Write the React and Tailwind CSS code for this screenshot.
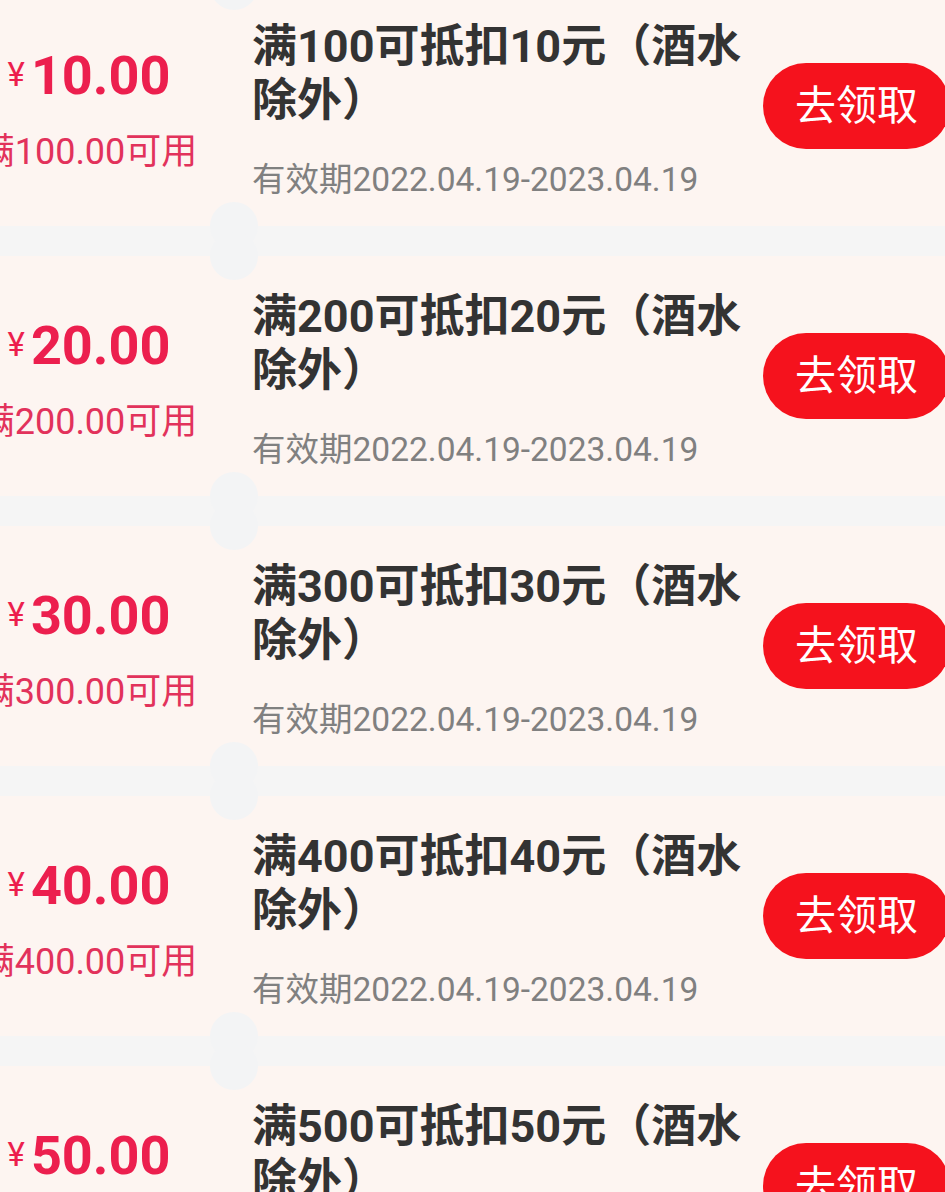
import React from 'react';

const coupons = [
  { amount: '10.00', min: '100', off: '10' },
  { amount: '20.00', min: '200', off: '20' },
  { amount: '30.00', min: '300', off: '30' },
  { amount: '40.00', min: '400', off: '40' },
  { amount: '50.00', min: '500', off: '50' },
];

const font = { fontFamily: "Roboto, 'Noto Sans CJK SC', sans-serif" };

const CouponCard = ({ amount, min, off }) => (
  <div className="relative flex h-[240px] shrink-0 items-start bg-[#fdf5f1]">
    {/* notches on the divider */}
    <span className="absolute left-[210px] top-[-24px] h-[48px] w-[48px] rounded-full bg-[#f3f4f5]" />
    <span className="absolute bottom-[-24px] left-[210px] h-[48px] w-[48px] rounded-full bg-[#f3f4f5]" />

    <div className="flex w-[176px] shrink-0 flex-col items-center pt-[60px]">
      <div className="ml-[2px] flex h-[60px] items-center whitespace-nowrap text-[#ec1f4e]">
        <span className="mr-[6px] mt-[-4px] text-[33px] leading-none">¥</span>
        <span className="text-[54px] font-bold leading-none">{amount}</span>
      </div>
      <div className="mt-[24px] whitespace-nowrap text-[36px] leading-[44px] text-[#e2325b]">
        满{min}.00可用
      </div>
    </div>

    <div className="ml-[76px] flex w-[493px] shrink-0 flex-col pt-[34px]">
      <div className="text-[45px] font-bold leading-[54px] text-[#333333]">
        满{min}可抵扣{off}元（酒水除外）
      </div>
      <div className="mt-[32px] whitespace-nowrap text-[33.5px] leading-[40px] text-[#808080]">
        有效期2022.04.19-2023.04.19
      </div>
    </div>

    <button className="ml-[18px] mt-[77px] flex h-[86px] shrink-0 items-center rounded-full bg-[#f5121d] px-[32px] text-[41px] leading-none whitespace-nowrap text-white">
      去领取
    </button>
  </div>
);

export default function App() {
  return (
    <div className="h-[1192px] w-[945px] overflow-hidden bg-[#f5f5f5]" style={font}>
      <div className="mt-[-14px] flex flex-col gap-[30px]">
        {coupons.map((c) => (
          <CouponCard key={c.amount} {...c} />
        ))}
      </div>
    </div>
  );
}
